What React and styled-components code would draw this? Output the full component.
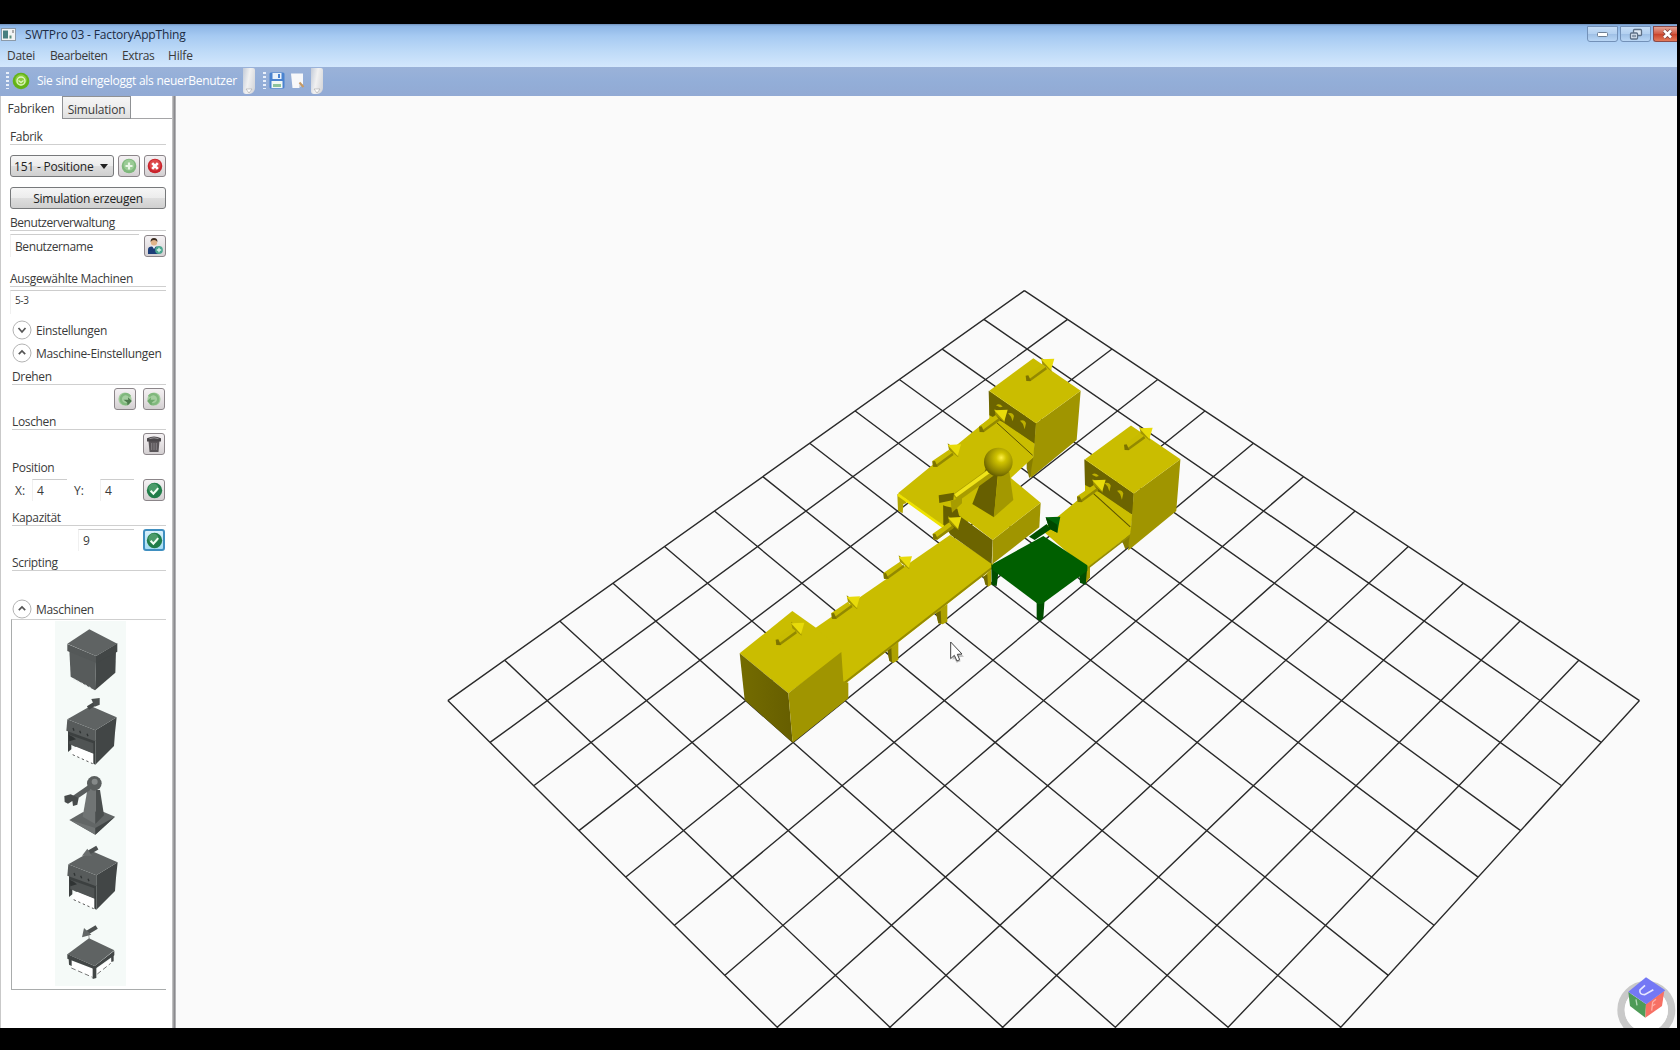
import React from "react";
import styled, { createGlobalStyle } from "styled-components";

const Global = createGlobalStyle`
  html, body { margin: 0; background: #000; overflow: hidden; }
  * { box-sizing: border-box; }
`;

const Screen = styled.div`
  width: 1680px;
  height: 1050px;
  padding: 24px 3px 22px 0;
  background: #000;
  font-family: "Open Sans", "Noto Sans", sans-serif;
  font-size: 12px;
  color: #3a3a3a;
  overflow: hidden;
`;

const Window = styled.div`
  height: 1004px;
  display: flex;
  flex-direction: column;
  background: #fafafa;
  overflow: hidden;
`;

const Chrome = styled.div`
  height: 43px;
  flex: none;
  background: linear-gradient(#6f8fb8 0, #8db6e6 2px, #a6caf2 12px, #bcd9f7 26px, #d3e7fd 43px);
`;

const TitleBar = styled.div`
  height: 20px;
  display: flex;
  align-items: center;
  padding-left: 1px;
`;

const Title = styled.span`
  flex: 1;
  margin-left: 9px;
  color: #1c2c44;
  letter-spacing: -0.15px;
`;

const WinButtons = styled.div`
  display: flex;
  gap: 2px;
  align-self: flex-start;
  padding-top: 2px;
`;

const WinButton = styled.div`
  width: ${(p) => p.$w || 31}px;
  height: 16px;
  display: flex;
  align-items: center;
  justify-content: center;
  border: 1px solid ${(p) => (p.$close ? "#8c4a48" : "#7391b8")};
  border-right-width: ${(p) => (p.$close ? 0 : 1)}px;
  border-radius: 0 0 ${(p) => (p.$close ? 0 : 3)}px 3px;
  background: ${(p) =>
    p.$close
      ? "linear-gradient(#e2a396, #d2573f 50%, #c9432b 52%, #e27a5a)"
      : "linear-gradient(#c5ddf7, #b3d0f0 50%, #9fc0e6 52%, #b9d6f5)"};
`;

const MenuBar = styled.div`
  height: 23px;
  display: flex;
  align-items: center;
  padding-left: 7px;
  gap: 15px;
`;

const MenuItem = styled.span`
  width: ${(p) => p.$w}px;
  white-space: nowrap;
  letter-spacing: ${(p) => p.$ls || -0.2}px;
`;

const ToolBar = styled.div`
  height: 29px;
  flex: none;
  display: flex;
  align-items: center;
  padding: 0 0 2px 6px;
  color: #fff;
  background: linear-gradient(#9ab2d9, #93aed8 50%, #92aad4);
`;

const Grip = styled.div`
  width: 3px;
  height: 17px;
  margin-left: ${(p) => p.$ml || 0}px;
  background: repeating-linear-gradient(#e8effa 0 2px, transparent 2px 4px);
`;

const ToolIcon = styled.div`
  display: flex;
  margin-left: ${(p) => p.$ml}px;
`;

const LoginText = styled.span`
  width: 201px;
  margin-left: 7px;
  white-space: nowrap;
  letter-spacing: -0.26px;
`;

const Overflow = styled.div`
  width: 12px;
  height: 26px;
  align-self: flex-start;
  margin: 1px 0 0 ${(p) => p.$ml}px;
  border-radius: 0 2px 6px 3px;
  background: linear-gradient(100deg, #c3cbd8 0, #f1f1f1 45%, #d0d2d6 100%);
  display: flex;
  align-items: flex-end;
  justify-content: center;
`;

const Body = styled.div`
  flex: 1;
  display: flex;
  min-height: 0;
`;

const Sidebar = styled.div`
  width: 172px;
  flex: none;
  background: #fff;
  box-shadow: inset 1px 0 0 #c9c9c9;
`;

const Divider = styled.div`
  width: 4px;
  flex: none;
  background: linear-gradient(90deg, #cfcfcf, #a9a9ab 30%, #86868a 60%, #c6c6c8);
`;

const Tabs = styled.div`
  height: 23px;
  display: flex;
  align-items: stretch;
`;

const Tab = styled.div`
  width: ${(p) => p.$w}px;
  display: flex;
  align-items: center;
  justify-content: center;
  white-space: nowrap;
  letter-spacing: -0.2px;
  padding-bottom: ${(p) => (p.$active ? 0 : 1)}px;
  padding-top: ${(p) => (p.$active ? 2 : 4)}px;
  border: 1px solid ${(p) => (p.$active ? "transparent" : "#8f9194")};
  background: ${(p) => (p.$active ? "none" : "linear-gradient(#f5f5f5, #ededed 50%, #dfdfdf)")};
`;

const TabFill = styled.div`
  flex: 1;
  border-bottom: 1px solid #a5a5a7;
`;

const Panel = styled.div`
  padding: 9px 6px 0 10px;
  display: flex;
  flex-direction: column;
`;

const Caption = styled.div`
  height: 17px;
  margin: ${(p) => p.$top || 0}px 0 0 ${(p) => (p.$in ? 2 : 0)}px;
  line-height: 18px;
  white-space: nowrap;
  letter-spacing: ${(p) => p.$ls || -0.35}px;
  border-bottom: 1px solid ${(p) => (p.$plain ? "transparent" : "#cfcfcf")};
`;

const Row = styled.div`
  height: ${(p) => p.$h || 22}px;
  margin-top: ${(p) => p.$top}px;
  padding-right: ${(p) => p.$pr || 0}px;
  display: flex;
  align-items: center;
  justify-content: flex-end;
  gap: ${(p) => p.$gap || 0}px;
`;

const face = "linear-gradient(#f6f6f6, #ececec 50%, #dedede 52%, #cfcfcf)";

const Combo = styled.div`
  width: 104px;
  height: 22px;
  padding: 0 5px 0 3px;
  display: flex;
  align-items: center;
  justify-content: space-between;
  white-space: nowrap;
  letter-spacing: -0.2px;
  border: 1px solid #77797b;
  border-radius: 3px;
  background: ${face};
  color: #222;
`;

const Caret = styled.i`
  border: 4px solid transparent;
  border-top: 5px solid #222;
  border-bottom: 0;
`;

const Button = styled.div`
  height: 22px;
  margin-top: 10px;
  display: flex;
  align-items: center;
  justify-content: center;
  letter-spacing: -0.28px;
  border: 1px solid #77797b;
  border-radius: 3px;
  background: ${face};
  color: #222;
`;

const IconButton = styled.div`
  width: 22px;
  height: 22px;
  flex: none;
  display: flex;
  align-items: center;
  justify-content: center;
  border: ${(p) => (p.$focus ? "2px solid #3f8fc0" : "1px solid #8b8589")};
  border-radius: 3px;
  background: ${(p) => (p.$focus ? "linear-gradient(#d7f0fb, #a5dcf3)" : "linear-gradient(#f4f1f3, #e6e2e4 50%, #d3cfd1)")};
`;

const Field = styled.div`
  width: ${(p) => p.$w}px;
  height: ${(p) => p.$h || 22}px;
  margin: ${(p) => p.$top || 0}px ${(p) => p.$mr || 0}px 0 0;
  padding: 0 0 ${(p) => p.$pb || 0}px 4px;
  display: flex;
  align-items: center;
  font-size: ${(p) => p.$fs || 12}px;
  letter-spacing: -0.4px;
  border-top: 1px solid #cdcdcd;
  border-left: 1px solid #f0f0f0;
`;

const Unit = styled.span`
  width: ${(p) => p.$w}px;
`;

const ExpanderRow = styled.div`
  height: 20px;
  margin: ${(p) => p.$top}px 0 0 2px;
  display: flex;
  align-items: center;
  gap: 4px;
  white-space: nowrap;
  letter-spacing: -0.32px;
`;

const MachineList = styled.div`
  height: 371px;
  margin-left: 1px;
  padding: 1px 0 0 43px;
  border: 1px solid #a9acac;
  border-top-color: #cfcfcf;
  border-right: 0;
`;

const Thumb = styled.div`
  width: 71px;
  height: 73px;
  background: #f5faf8;
`;

const Viewport = styled.div`
  flex: 1;
  overflow: hidden;
  background: #fafafa;
`;

/* ---------- small icons ---------- */

const Expander = ({ open, top, children }) => (
  <ExpanderRow $top={top}>
    <svg width="20" height="20" viewBox="0 0 20 20" fill="none">
      <circle cx="10" cy="10" r="9" fill="#fff" stroke="#aaa" strokeWidth="0.9" />
      <path d={open ? "M6.800 11.200 10 8l3.200 3.200" : "M6.500 8 10 12l3.500-4"} stroke="#555" strokeWidth="1.700" />
    </svg>
    {children}
  </ExpanderRow>
);

const AddIcon = () => (
  <svg width="16" height="16" viewBox="0 0 16 16">
    <circle cx="8" cy="8" r="7.3" fill="#7fb87c" />
    <circle cx="8" cy="7" r="5.5" fill="#9acb95" />
    <path d="M8 4.5v7M4.5 8h7" stroke="#e9f6e6" strokeWidth="2.2" />
  </svg>
);

const DeleteIcon = () => (
  <svg width="16" height="16" viewBox="0 0 16 16">
    <circle cx="8" cy="8" r="7.3" fill="#c9232c" />
    <circle cx="8" cy="7" r="5.6" fill="#dd4a4a" />
    <path d="m5.2 5.2 5.6 5.6M10.8 5.2l-5.6 5.6" stroke="#fff" strokeWidth="2.6" />
  </svg>
);

const UserIcon = () => (
  <svg width="18" height="18" viewBox="0 0 18 18">
    <path d="M2 17v-4.5q0-3 4-3h4q3 0 3 3V17z" fill="#1c3d78" />
    <path d="m6 9 2 3 2-3z" fill="#e9eef5" />
    <circle cx="8" cy="5.3" r="3.2" fill="#e0b48a" />
    <path d="M4.6 5q-.2-4 3.4-4t3.4 4q-1-2-3.4-2T4.6 5" fill="#3c2c20" />
    <circle cx="13" cy="13" r="3.9" fill="#4aa58f" />
    <path d="M13 10.8v4.4M10.8 13h4.4" stroke="#d8f3ea" strokeWidth="1.3" />
  </svg>
);

const RotateIcon = ({ flip }) => (
  <svg width="16" height="16" viewBox="0 0 16 16">
    <g transform={flip ? "translate(16 0) scale(-1 1)" : undefined}>
      <circle cx="8" cy="8" r="6.6" fill="#a5cfa0" />
      <path d="M13 5.5A5 5 0 1 0 12 12" fill="none" stroke="#80b87d" strokeWidth="2.4" />
      <path d="M6.500 8.800h4.800l-.4-2.600 4 3.800-4.400 4.400-.3-2.800z" fill={flip ? "#6ea86c" : "#4c7a4c"} />
    </g>
  </svg>
);

const TrashIcon = () => (
  <svg width="16" height="18" viewBox="0 0 16 18">
    <path d="M2.5 6h11l-1 11h-9z" fill="#5a5659" />
    <path d="M1 3.2q7-3.6 14 0V6.500H1z" fill="#4a474a" />
    <path d="M3.500 3.600q4.500-1.600 9 0" stroke="#99969a" fill="none" />
    <path d="M5.700 8v7M8 8v7M10.300 8v7" stroke="#8c888b" strokeWidth="0.9" />
  </svg>
);

const CheckIcon = () => (
  <svg width="17" height="17" viewBox="0 0 17 17">
    <circle cx="8.500" cy="8.500" r="7.700" fill="#217d49" />
    <circle cx="7.500" cy="6.500" r="5" fill="#4b9b69" />
    <path d="m4.600 8.700 2.800 3 4.800-5.600" stroke="#f2fff5" strokeWidth="2" fill="none" />
  </svg>
);

/* ---------- list thumbnails ---------- */

const Dark = "#424646";
const Mid = "#575b5b";
const Lite = "#5f6363";

const Cabinet = () => (
  <>
    <path d="M204 388 286 420V494L278 490V440L214 420V448L204 456Z" fill="#3c4040" />
    <path d="M208 404 280 430V462L238 446 208 432Z" fill="#505454" />
    <path d="M206 404 218 410 228 418 208 424Z" fill="#2f3333" />
    <path d="M228 440 280 461V492L214 462V450Z" fill="#fff" />
    <path d="M218 464 278 491" stroke="#555" strokeWidth="3" strokeDasharray="7 8" />
    <path d="M202 358 286 391V424L199 392Z" fill={Mid} />
    <path d="M286 391 350 352 345 398 342 438 286 494Z" fill={Dark} />
    <path d="M202 358 272 318 350 352 286 391Z" fill={Lite} />
    <path d="m219 384 3 8M239 392l3 8M261 401l3 8" stroke="#303434" strokeWidth="4" />
  </>
);

const thumbs = [
  <svg key="a" width="71" height="73" viewBox="165 63 213 219">
    <path d="M208 150 288 182 285 271 268 262 212 230Z" fill={Mid} />
    <path d="M288 182 348 152 346 218 285 271Z" fill={Dark} />
    <path d="M202 132 288 168V188L202 153Z" fill="#545858" />
    <path d="M288 168 352 130V155L288 190Z" fill={Dark} />
    <path d="M268 88 352 131 288 168 202 131Z" fill={Lite} />
    <path d="M220 237 276 266" stroke="#e6eae9" strokeWidth="4" strokeDasharray="6 7" />
  </svg>,
  <svg key="b" width="71" height="73" viewBox="165 282 213 219">
    <Cabinet />
    <path d="m264 324 22-14" stroke="#444848" strokeWidth="12" />
    <path d="M274 297 299 294V314L284 320Z" fill="#4c5050" />
  </svg>,
  <svg key="c" width="71" height="73" viewBox="165 501 213 219">
    <path d="M248 637 208 660 286 704 345 650 306 634Z" fill="#626666" />
    <path d="M210 660 286 684V704Z" fill="#707474" />
    <path d="M286 684 345 650 286 704Z" fill={Dark} />
    <path d="M262 570 248 650 286 672 286 570Z" fill="#707474" />
    <path d="M286 570H300L312 646 286 672Z" fill="#4a4e4e" />
    <path d="m222 594 50-34" stroke="#5a5e5e" strokeWidth="15" />
    <path d="M193 588 212 583 236 594 232 614 219 618 217 603 204 611 194 606Z" fill="#474b4b" />
    <circle cx="283" cy="550" r="22" fill="#5a5e5e" />
    <circle cx="284" cy="545" r="9" fill="#858989" />
  </svg>,
  <svg key="d" width="71" height="73" viewBox="165 90 213 219">
    <g transform="translate(3 -195)">
      <Cabinet />
    </g>
    <path d="m262 130 30-17" stroke="#4c5050" strokeWidth="13" />
    <path d="M246 137 262 116 276 138Z" fill="#6a6e6e" />
  </svg>,
  <svg key="e" width="71" height="73" viewBox="165 309 213 219">
    <path d="M214 452 278 476V502L214 472ZM290 476 334 446V458L290 492Z" fill="#fff" />
    <path d="M214 474 278 502M292 492 332 460" stroke="#777" strokeWidth="3" strokeDasharray="14 8" />
    <path d="M202 432 284 468 343 422V436L284 478 202 446Z" fill={Dark} />
    <path d="M206 446H215V468L207 464ZM278 474H289V504L278 507ZM333 434H341V454L334 456Z" fill={Dark} />
    <path d="M267 385 343 421 284 468 202 433Z" fill={Lite} />
    <path d="m260 369 30-18" stroke="#4c5050" strokeWidth="13" />
    <path d="M246 382 252 354 274 374Z" fill="#636767" />
    <path d="m266 374 2 14" stroke="#777" strokeWidth="2" />
  </svg>,
];

/* ---------- 3D scene ---------- */

const project = (i, j) => {
  const s = i + j;
  const p = 1 / (0.012123 - 0.00017106 * s);
  return [1024.4 + 1.146 * (p - 82.49) + ((i - j) / 2) * p, -1720.4 + 24.38 * p];
};

const gridPath = () => {
  let d = "";
  for (let k = 0; k <= 12; k++) {
    d += `M${project(k, 0)}L${project(k, 12)}M${project(0, k)}L${project(12, k)}`;
  }
  return d;
};

const Arrow = ({ x, y }) => (
  <g transform={`translate(${x} ${y})`}>
    <path d="M-8-9 42-43 54-27 8 8-6 8Z" fill="#c8bb00" />
    <path d="M2 3 52-34 56-27 6 9-6 8Z" fill="#938900" />
    <path d="M-8-8 0-9 8 8-6 8Z" fill="#7d7400" />
    <path d="M38-62 66-42 70-20 42-42Z" fill="#a19500" />
    <path d="M38-57 78-59 68-24Z" fill="#e8db0a" />
  </g>
);

const top = "#cabd00";
const right = "#a09500";
const front = "#6c6400";

const Processor = ({ x, y, k = 1 }) => (
  <g transform={`translate(${x} ${y}) scale(${k})`}>
    <path d="M0 0 140 98 136 152 126 190 0 100Z" fill={top} />
    <path d="M-2 0 140 98 137 160 40 94 0 74Z" fill={front} />
    <path d="M38 96 136 160 133 198 30 100Z" fill={top} />
    <path d="M20 94 130 194" stroke="#5b5300" strokeWidth="3" />
    <path d="M140 98 274 0 262 148 124 262 126 236 132 198Z" fill={right} />
    <path d="M132 -97 274 0 140 98 0 0Z" fill={top} />
    <path d="M20 44q10-8 20 4l-8 2zM56 68q14-4 18 8l-4 16-5-14zM92 90q14-4 18 8l-4 18-5-16z" fill="#bdb000" />
  </g>
);

const Scene = () => (
  <svg width="1501" height="932" viewBox="176 96 1501 932">
    <defs>
      <radialGradient id="ball" cx="0.6" cy="0.35" r="0.7">
        <stop offset="0" stopColor="#fff04a" />
        <stop offset="0.25" stopColor="#cfc200" />
        <stop offset="0.75" stopColor="#8a8000" />
        <stop offset="1" stopColor="#5d5600" />
      </radialGradient>
      <linearGradient id="cubeLeft">
        <stop offset="0" stopColor="#746c00" />
        <stop offset="1" stopColor="#665e00" />
      </linearGradient>
    </defs>
    <path d={gridPath()} fill="none" stroke="#2a2a2a" strokeWidth="1.400" />

    <g transform="translate(880 340) scale(.33333)">
      <path d="M52 462 72 470 80 490 70 492 68 520 54 512Z" fill="#b3a700" />
      <path d="M440 365 462 350 460 402 448 414 440 385Z" fill="#877d00" />
      <path d="M54 460 340 225 462 350 395 412 250 560 190 560Z" fill={top} />
      <path d="M54 464 192 562" stroke="#efe300" strokeWidth="8" />
      <Processor x={328} y={152} />

      <path d="M610 672 630 660V712L618 728Z" fill="#a79b00" />
      <path d="M726 602 752 580 748 618 736 628Z" fill="#877d00" />
      <path d="M485 570 630 450 755 558 752 582 622 684 600 670Z" fill={top} />
      <path d="M624 684 753 584" stroke="#958b00" strokeWidth="5" />
      <Processor x={615} y={358} k={1.045} />
    </g>

    <g transform="translate(720 480) scale(.33333)">
      <path d="M648 396 682 372V425L668 433 655 430ZM502 508 535 484V540L520 549 508 542ZM790 290 814 268V314L804 320Z" fill="#aea200" />
      <path d="M648 400 662 392 664 430 655 430ZM502 510 514 503 516 547 508 543ZM790 290 802 283 804 319 796 314Z" fill="#716900" />
      <path d="M285 445 690 165 820 252 815 268 372 614 350 600Z" fill={top} />
      <path d="M372 610 815 264" stroke="#968b00" strokeWidth="6" />
      <path d="M217 393 290 445 370 518 205 640 59 520Z" fill={top} />
      <path d="M59 520 205 640 218 788 74 660Z" fill="url(#cubeLeft)" />
      <path d="M205 640 364 516 370 604 385 608V655L218 788Z" fill={right} />
    </g>

    <g transform="translate(880 340) scale(.33333)">
      <path d="M190 495 235 525 338 600 335 672 212 585 192 556Z" fill={front} />
      <path d="M338 600 482 488 478 562 337 672Z" fill={right} />
      <path d="M240 525 250 470 390 412 482 488 338 600Z" fill={top} />
      <path d="M318 385H355L342 532 277 492Z" fill="#675f00" />
      <path d="M355 400 388 395 400 480 341 532Z" fill="#a39800" />
      <path d="M190 497 232 506 238 530 205 540 190 556Z" fill="#665e00" />
      <path d="M226 474 338 393" stroke="#a89c00" strokeWidth="26" />
      <path d="M226 467 334 389" stroke="#f0e418" strokeWidth="11" />
      <path d="M176 466 222 458 220 480 178 489Z" fill="#6a6200" />
      <path d="M212 484 246 470 246 490 216 518Z" fill="#a79c00" />
      <circle cx="355" cy="366" r="43" fill="url(#ball)" />

      <path d="M334 672 356 690 350 738 335 735ZM470 780 494 776 490 834 481 844 470 836ZM597 698 622 678 617 735 600 728Z" fill="#004e00" />
      <path d="M338 672 490 588 622 676V692L486 792 474 792 338 690Z" fill="#005f00" />
      <path d="M447 590 500 552 512 568 464 600Z" fill="#004f00" />
      <path d="M497 532 541 530 536 556 532 578 508 566Z" fill="#00640a" />
      <path d="M497 532 532 554 532 578 508 566Z" fill="#004800" />
      {[[445, 115], [165, 372], [305, 268], [740, 322], [599, 478], [166, 590], [18, 708]].map(([x, y]) => (
        <Arrow key={x} x={x} y={y} />
      ))}
    </g>
    <g transform="translate(720 480) scale(.33333)">
      <Arrow x={175} y={487} />
      <Arrow x={342} y={408} />
      <path d="M698 494 732 530 716 532 722 544 710 548 703 536 698 540Z" fill="#9a9a9a" opacity=".6" />
      <path d="M692 486V536L703 526 711 543 719 539 712 523 726 522Z" fill="#fff" stroke="#444" strokeWidth="3" />
    </g>

    <g transform="translate(1580 950) scale(.33333)">
      <circle cx="199" cy="180" r="76" fill="none" stroke="#c9c9c9" strokeWidth="22" />
      <circle cx="199" cy="180" r="65" fill="#fff" />
      <path d="M145 126 198 162 196 203 150 168Z" fill="#4e9b57" />
      <path d="M198 162 253 122 246 168 196 203Z" fill="#f77064" />
      <path d="M198 82 256 121 199 163 145 125Z" fill="#7478f5" />
      <path d="m168 148 3 18" stroke="#b5dab8" strokeWidth="4" />
      <path d="m218 156-3 26M218 156l10-8M217 168l9-6" stroke="#ffada4" strokeWidth="4" fill="none" />
      <path d="M195 106 180 120Q177 134 194 134L220 119" fill="none" stroke="#e6e7ff" strokeWidth="5" />
    </g>
  </svg>
);

export default function App() {
  return (
    <Screen>
      <Global />
      <Window>
        <Chrome>
          <TitleBar>
            <svg width="15" height="13" viewBox="0 0 15 13">
              <rect x=".5" y=".5" width="14" height="12" fill="#f2f4f4" stroke="#8c9aa8" />
              <rect x="2" y="2.500" width="5" height="8" fill="#477f80" />
              <rect x="8.500" y="7.500" width="2" height="3" fill="#5b8f7d" />
              <path d="M12 2v3" stroke="#666" />
            </svg>
            <Title>SWTPro 03 - FactoryAppThing</Title>
            <WinButtons>
              <WinButton>
                <svg width="14" height="8"><rect x="1.500" y="2.500" width="10" height="4" rx="1" fill="#fff" stroke="#6d7f95" /></svg>
              </WinButton>
              <WinButton>
                <svg width="14" height="13" fill="#dfe9f5" stroke="#5d6f85" strokeWidth="1.300">
                  <rect x="4.500" y="1.500" width="8" height="6" rx="1" />
                  <rect x="1.500" y="5" width="7" height="6" rx="1" />
                  <rect x="3.800" y="7.200" width="2.500" height="1.600" strokeWidth=".8" />
                </svg>
              </WinButton>
              <WinButton $close $w={24}>
                <svg width="14" height="12" viewBox="0 0 14 12">
                  <path d="m5 2.500 7 7M12 2.500l-7 7" stroke="#7b4440" strokeWidth="4" />
                  <path d="m5 2.500 7 7M12 2.500l-7 7" stroke="#fff" strokeWidth="2.500" />
                </svg>
              </WinButton>
            </WinButtons>
          </TitleBar>
          <MenuBar>
            <MenuItem $w={28} $ls={-0.3}>Datei</MenuItem>
            <MenuItem $w={57} $ls={-0.4}>Bearbeiten</MenuItem>
            <MenuItem $w={31} $ls={-0.35}>Extras</MenuItem>
            <MenuItem $w={26}>Hilfe</MenuItem>
          </MenuBar>
        </Chrome>
        <ToolBar>
          <Grip />
          <ToolIcon $ml={3}>
            <svg width="18" height="18" viewBox="0 0 18 18">
              <circle cx="9" cy="9" r="8.300" fill="#63b317" />
              <circle cx="9" cy="8" r="5.800" fill="#8ccc3c" />
              <circle cx="9" cy="9" r="4" fill="none" stroke="#e2f6c6" strokeWidth="1.300" />
              <path d="M6.500 8.500 9 10.500l2.500-2" fill="none" stroke="#e2f6c6" strokeWidth="1.200" />
            </svg>
          </ToolIcon>
          <LoginText>Sie sind eingeloggt als neuerBenutzer</LoginText>
          <Overflow $ml={5}>
            <svg width="8" height="6"><path d="M1 1h6L4 5z" fill="#fff" stroke="#999" strokeWidth=".5" /></svg>
          </Overflow>
          <Grip $ml={8} />
          <ToolIcon $ml={3}>
            <svg width="16" height="17" viewBox="0 0 16 17">
              <rect x=".5" y=".5" width="15" height="16" rx="1.500" fill="#4a83d0" />
              <rect x="3.500" y="1" width="9" height="6" fill="#e9f2fb" />
              <rect x="9" y="2" width="2" height="4" fill="#4a83d0" />
              <rect x="2.500" y="9" width="11" height="7" fill="#f2f8f4" />
              <rect x="4" y="12" width="8" height="3" fill="#8dc39b" />
            </svg>
          </ToolIcon>
          <ToolIcon $ml={5}>
            <svg width="15" height="17" viewBox="0 0 15 17">
              <path d="M1 1.500h12V12l-4 4H2.500z" fill="#f7f8fa" />
              <path d="m9 16 4-4H9.500z" fill="#c9cdd4" />
              <path d="m9.500 10.500 4 4.500" stroke="#c79a63" strokeWidth="2" />
            </svg>
          </ToolIcon>
          <Overflow $ml={6}>
            <svg width="8" height="6"><path d="M1 1h6L4 5z" fill="#fff" stroke="#999" strokeWidth=".5" /></svg>
          </Overflow>
        </ToolBar>
        <Body>
          <Sidebar>
            <Tabs>
              <Tab $active $w={62}>Fabriken</Tab>
              <Tab $w={69}>Simulation</Tab>
              <TabFill />
            </Tabs>
            <Panel>
              <Caption>Fabrik</Caption>
              <Row $top={10} $gap={4}>
                <Combo>151 - Positione<Caret /></Combo>
                <IconButton><AddIcon /></IconButton>
                <IconButton><DeleteIcon /></IconButton>
              </Row>
              <Button>Simulation erzeugen</Button>
              <Caption $top={5} $ls={-0.45}>Benutzerverwaltung</Caption>
              <Row $top={3} $h={23}>
                <Field $w={129} $h={23} $mr={5}>Benutzername</Field>
                <IconButton><UserIcon /></IconButton>
              </Row>
              <Caption $top={13} $ls={-0.32}>Ausgewählte Machinen</Caption>
              <Field $top={3} $h={24} $fs={10} $pb={6}>5-3</Field>
              <Expander top={6}>Einstellungen</Expander>
              <Expander top={3} open>Maschine-Einstellungen</Expander>
              <Caption $in $top={5}>Drehen</Caption>
              <Row $top={3} $gap={7} $pr={1}>
                <IconButton><RotateIcon /></IconButton>
                <IconButton><RotateIcon flip /></IconButton>
              </Row>
              <Caption $in $top={3}>Loschen</Caption>
              <Row $top={3} $pr={1}>
                <IconButton><TrashIcon /></IconButton>
              </Row>
              <Caption $in $plain $top={4}>Position</Caption>
              <Row $top={3} $pr={1}>
                <Unit $w={17}>X:</Unit>
                <Field $w={35} $mr={7}>4</Field>
                <Unit $w={26}>Y:</Unit>
                <Field $w={34} $mr={9}>4</Field>
                <IconButton><CheckIcon /></IconButton>
              </Row>
              <Caption $in $top={8}>Kapazität</Caption>
              <Row $top={3} $pr={1}>
                <Field $w={56} $mr={9}>9</Field>
                <IconButton $focus><CheckIcon /></IconButton>
              </Row>
              <Caption $in $top={3}>Scripting</Caption>
              <Expander top={28} open>Maschinen</Expander>
              <MachineList>
                {thumbs.map((t, i) => (
                  <Thumb key={i}>{t}</Thumb>
                ))}
              </MachineList>
            </Panel>
          </Sidebar>
          <Divider />
          <Viewport>
            <Scene />
          </Viewport>
        </Body>
      </Window>
    </Screen>
  );
}
